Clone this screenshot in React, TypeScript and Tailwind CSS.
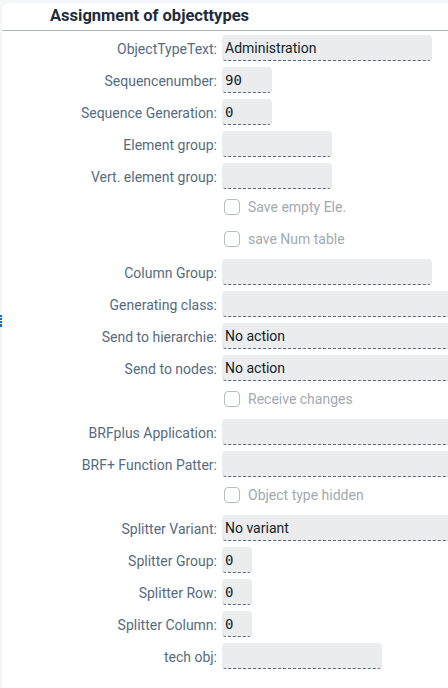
import React from "react";

type Row =
  | { kind: "field"; label: string; value?: string; width: string; mono?: boolean }
  | { kind: "check"; label: string };

const rows: Row[] = [
  { kind: "field", label: "ObjectTypeText:", value: "Administration", width: "w-[210px]" },
  { kind: "field", label: "Sequencenumber:", value: "90", width: "w-[50px]", mono: true },
  { kind: "field", label: "Sequence Generation:", value: "0", width: "w-[50px]", mono: true },
  { kind: "field", label: "Element group:", width: "w-[110px]" },
  { kind: "field", label: "Vert. element group:", width: "w-[110px]" },
  { kind: "check", label: "Save empty Ele." },
  { kind: "check", label: "save Num table" },
  { kind: "field", label: "Column Group:", width: "w-[210px]" },
  { kind: "field", label: "Generating class:", width: "w-[260px]" },
  { kind: "field", label: "Send to hierarchie:", value: "No action", width: "w-[260px]" },
  { kind: "field", label: "Send to nodes:", value: "No action", width: "w-[260px]" },
  { kind: "check", label: "Receive changes" },
  { kind: "field", label: "BRFplus Application:", width: "w-[260px]" },
  { kind: "field", label: "BRF+ Function Patter:", width: "w-[260px]" },
  { kind: "check", label: "Object type hidden" },
  { kind: "field", label: "Splitter Variant:", value: "No variant", width: "w-[260px]" },
  { kind: "field", label: "Splitter Group:", value: "0", width: "w-[30px]", mono: true },
  { kind: "field", label: "Splitter Row:", value: "0", width: "w-[30px]", mono: true },
  { kind: "field", label: "Splitter Column:", value: "0", width: "w-[30px]", mono: true },
  { kind: "field", label: "tech obj:", width: "w-[160px]" },
];

export default function App() {
  return (
    <div
      className="relative w-[448px] h-[688px] overflow-hidden bg-[#f5f6f7] pt-[3px] pl-[2px]"
      style={{ fontFamily: "Roboto, 'Liberation Sans', sans-serif" }}
    >
      {/* drag handle marks on the left edge */}
      <div className="absolute left-0 top-[315px] flex flex-col gap-[1px]">
        <div className="w-[2px] h-[2px] bg-[#0a6ed1]" />
        <div className="w-[2px] h-[2px] bg-[#0a6ed1]" />
        <div className="w-[2px] h-[2px] bg-[#0a6ed1]" />
        <div className="w-[2px] h-[3px] bg-[#0a6ed1]" />
      </div>

      <div className="bg-white rounded-tl-lg h-full overflow-hidden">
        {/* HEADER */}
        <div className="h-[28px] border-b border-[#a9b4be] pl-[48px] flex items-center">
          <h2 className="text-[16.5px] font-bold text-[#1d2d3e] whitespace-nowrap">
            Assignment of objecttypes
          </h2>
        </div>

        {/* FORM */}
        <div className="pt-[3px] flex flex-col gap-[6px]">
          {rows.map((r, i) => (
            <div key={i} className="grid grid-cols-[215px_1fr] gap-x-[5px] h-[26px] items-center">
              <div className="text-right text-[14px] leading-[26px] pt-[2px] text-[#556b82] whitespace-nowrap">
                {r.kind === "field" ? r.label : ""}
              </div>
              {r.kind === "field" ? (
                <div
                  className={`${r.width} shrink-0 h-[26px] bg-[#eaecee] rounded-[4px] border-b border-dashed border-[#556b82] px-[3px] pt-[2px] flex items-center text-[14px] text-[#131e29] whitespace-nowrap`}
                  style={r.mono ? { fontFamily: "'DejaVu Sans Mono', monospace" } : undefined}
                >
                  {r.value ?? ""}
                </div>
              ) : (
                <label className="flex items-center gap-[8px] pl-[2px] text-[14px] text-[#a2a9b0] whitespace-nowrap">
                  <span className="w-[16px] h-[16px] rounded-[4px] border border-[#b4bcc4] bg-white" />
                  <span className="pt-[1px]">{r.label}</span>
                </label>
              )}
            </div>
          ))}
        </div>
      </div>
    </div>
  );
}
